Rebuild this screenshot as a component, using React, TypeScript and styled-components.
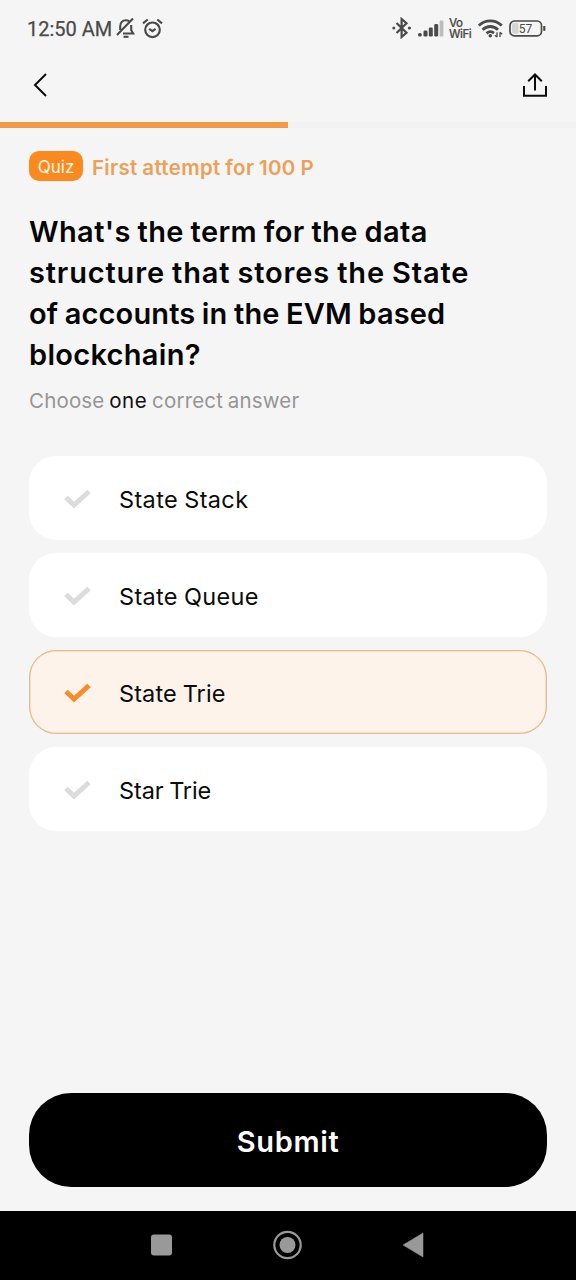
import React from 'react';
import styled, { createGlobalStyle } from 'styled-components';

const GlobalStyle = createGlobalStyle`
  * { box-sizing: border-box; }
  body { margin: 0; background: #f5f5f5; }
`;

const Screen = styled.div`
  width: 576px;
  height: 1280px;
  display: flex;
  flex-direction: column;
  background: #f5f5f5;
  color: #060606;
  font-family: Inter, "Open Sans", sans-serif;
  overflow: hidden;
`;

const StatusBar = styled.header`
  height: 56px;
  flex: none;
  display: flex;
  align-items: center;
  padding: 0 30px 0 27px;
  color: #4a4a4a;
  svg { display: block; flex: none; }
`;

const Clock = styled.span`
  width: 89px;
  padding-top: 1px;
  font: 400 20px/24px Roboto, sans-serif;
  white-space: nowrap;
  -webkit-text-stroke: 0.25px currentColor;
`;

const StatusIcons = styled.div<{ $push?: boolean }>`
  display: flex;
  align-items: center;
  gap: 6px;
  margin-left: ${(p) => (p.$push ? 'auto' : '0')};
`;

const NetworkLabel = styled.div`
  width: 22px;
  display: flex;
  flex-direction: column;
  gap: 1px;
  margin-left: -1px;
  margin-right: 1px;
  font: 500 11.5px/10px Inter, sans-serif;
  letter-spacing: -0.45px;
  white-space: nowrap;
  -webkit-text-stroke: 0.2px currentColor;
`;

const NavBar = styled.nav`
  height: 65px;
  flex: none;
  display: flex;
  align-items: center;
  justify-content: space-between;
  padding: 0 28px 8px 32px;
`;

const IconButton = styled.button`
  display: flex;
  padding: 0;
  border: 0;
  background: none;
  color: #0c0c0c;
`;

const ProgressTrack = styled.div`
  height: 6px;
  flex: none;
  margin-top: 0.5px;
  background: #f2f2f2;
`;

const ProgressFill = styled.div`
  width: 50%;
  height: 100%;
  background: #f39a49;
`;

const Content = styled.main`
  flex: 1;
  display: flex;
  flex-direction: column;
  padding: 23.5px 29px 23.5px;
`;

const AttemptRow = styled.div`
  display: flex;
  align-items: center;
  gap: 9px;
  height: 30px;
`;

const Badge = styled.span`
  width: 54px;
  height: 30px;
  border-radius: 10px;
  background: #fb8a1e;
  color: #fff3e4;
  display: flex;
  align-items: center;
  justify-content: center;
  font-size: 17px;
  padding-top: 1px;
`;

const Attempt = styled.span`
  padding-top: 2px;
  color: #eda057;
  font-size: 20.5px;
  font-weight: 600;
  letter-spacing: 0.32px;
  word-spacing: -0.8px;
  white-space: nowrap;
`;

const Question = styled.h1`
  margin: 30px 0 0;
  font-size: 29px;
  line-height: 41px;
  font-weight: 600;
`;

const Line = styled.span<{ $tracking: number }>`
  display: block;
  letter-spacing: ${(p) => p.$tracking}px;
  word-spacing: -1px;
  white-space: nowrap;
`;

const Hint = styled.p`
  margin: 12px 0 0;
  font-size: 20.5px;
  line-height: 28px;
  letter-spacing: 0.17px;
  word-spacing: -1.2px;
  color: #959595;
  strong { font-weight: 400; color: #101010; letter-spacing: 0.6px; }
`;

const Options = styled.div`
  display: flex;
  flex-direction: column;
  gap: 13px;
  margin-top: 41px;
`;

const Option = styled.button<{ $selected?: boolean }>`
  height: 84px;
  display: flex;
  align-items: center;
  gap: 27px;
  padding: 2px 34px 0;
  border: 0;
  border-radius: 27px;
  background: ${(p) => (p.$selected ? '#fdf3ea' : '#fff')};
  box-shadow: ${(p) => (p.$selected ? 'inset 0 0 0 1.3px #e9b98a' : 'none')};
  color: #0b0b0b;
  text-align: left;
`;

const OptionLabel = styled.span<{ $tracking: number }>`
  padding-top: 1px;
  font: 400 23.5px/32px Inter, sans-serif;
  letter-spacing: ${(p) => p.$tracking}px;
  word-spacing: -0.8px;
`;

const Submit = styled.button`
  height: 94px;
  margin-top: auto;
  border: 0;
  border-radius: 42px;
  background: #000;
  color: #fff;
  font: 600 29px/38px Inter, sans-serif;
  letter-spacing: 0.65px;
  padding: 4px 0 0;
`;

const SystemBar = styled.footer`
  height: 69.5px;
  flex: none;
  display: flex;
  align-items: center;
  justify-content: center;
  gap: 100px;
  background: #000;
`;

const Check = ({ color }: { color: string }) => (
  <svg width="29" height="22" viewBox="0 0 29 22" fill="none" stroke={color} strokeWidth="5">
    <path d="M3 9.5 11 17 26 3.5" />
  </svg>
);

const questionLines = [
  { text: "What's the term for the data", tracking: 0.39 },
  { text: 'structure that stores the State', tracking: 0.84 },
  { text: 'of accounts in the EVM based', tracking: 0.15 },
  { text: 'blockchain?', tracking: 0.3 },
];

const answers = [
  { text: 'State Stack', tracking: 0.36 },
  { text: 'State Queue', tracking: 0.33 },
  { text: 'State Trie', tracking: 0.1, selected: true },
  { text: 'Star Trie', tracking: -0.12 },
];

export default function App() {
  return (
    <Screen>
      <GlobalStyle />
      <StatusBar>
        <Clock>12:50 AM</Clock>
        <StatusIcons>
          <svg width="20" height="22" viewBox="0 0 20 22" fill="none" stroke="currentColor" strokeWidth="2.1">
            <path d="M4.2 13V9.2C4.2 5.8 6.4 3.3 9.8 3.3c1.3 0 2.3.3 3.2.9M15.2 8v5.2l2 3.3H7M1 18 17 1.5" />
            <path d="M7.5 19.8h5" />
          </svg>
          <svg width="21" height="21" viewBox="0 0 21 21" fill="none" stroke="currentColor" strokeWidth="2.2">
            <circle cx="10.5" cy="11.8" r="7.3" />
            <path d="M7.2 10.8l3.2 2.4 3.2-2.4M1 5.3 5.7 1.5M20 5.3 15.3 1.5" />
          </svg>
        </StatusIcons>
        <StatusIcons $push>
          <svg width="20" height="22" viewBox="0 0 20 22" fill="none" stroke="currentColor" strokeWidth="2.2">
            <path d="M4.5 6 14.5 15.8 9.6 20V2l4.9 4.2L4.5 16" />
            <circle cx="1.8" cy="11" r="1.5" fill="currentColor" stroke="none" />
            <circle cx="17.4" cy="11" r="1.6" fill="currentColor" stroke="none" />
          </svg>
          <svg width="26" height="17" viewBox="0 0 26 17" fill="currentColor">
            <rect x="0" y="13" width="3.8" height="3.6" rx="1.6" />
            <rect x="5.5" y="10.6" width="4" height="6" rx="1.4" />
            <rect x="10.8" y="7.4" width="4" height="9.2" rx="1.4" />
            <rect x="16.2" y="4" width="4" height="12.6" rx="1.4" />
            <rect x="21.6" y="0.4" width="3.8" height="16.2" rx="1.2" fill="#bdbdbd" />
          </svg>
          <NetworkLabel><span>Vo</span><span>WiFi</span></NetworkLabel>
          <svg width="25" height="19" viewBox="0 0 25 19" fill="none" stroke="currentColor" strokeWidth="2.8">
            <path d="M0.8 6.6C7.3.2 17.3.2 23.8 6.6M4.6 10.8c4.6-4.4 10.8-4.4 15.4 0M8.6 14.4c2.4-2.2 5-2.2 7.4-.3" />
            <circle cx="12.3" cy="16.7" r="1.8" fill="currentColor" stroke="none" />
            <path d="M19 13.2V18M16.9 16.2 19 18M22 18v-4.8M24.2 15.2 22 13.2" strokeWidth="1.3" />
          </svg>
          <svg width="37" height="17" viewBox="0 0 37 17">
            <rect x="1" y="1" width="31.5" height="14.8" rx="4.4" fill="none" stroke="currentColor" strokeWidth="1.7" />
            <path d="M5 3h4.5v10.8H5Q3 13.8 3 11.8V5Q3 3 5 3Z" fill="#d5d5d5" />
            <path d="M35.3 6v4.8" stroke="currentColor" strokeWidth="2.2" />
            <text x="16.6" y="12.6" textAnchor="middle" fontFamily="Roboto" fontSize="12" fontWeight="400" fill="currentColor">57</text>
          </svg>
        </StatusIcons>
      </StatusBar>
      <NavBar>
        <IconButton aria-label="Back">
          <svg width="16" height="26" viewBox="0 0 16 26" fill="none" stroke="currentColor" strokeWidth="2">
            <path d="M14 2 3 13 14 24" />
          </svg>
        </IconButton>
        <IconButton aria-label="Share">
          <svg width="26" height="26" viewBox="0 0 26 26" fill="none" stroke="currentColor" strokeWidth="2">
            <path d="M13 18.5V2.8M6.2 9.3 13 2.5l6.8 6.8M2 14v9.7h22V14" />
          </svg>
        </IconButton>
      </NavBar>
      <ProgressTrack><ProgressFill /></ProgressTrack>
      <Content>
        <AttemptRow>
          <Badge>Quiz</Badge>
          <Attempt>First attempt for 100 P</Attempt>
        </AttemptRow>
        <Question>
          {questionLines.map((line) => (
            <Line key={line.text} $tracking={line.tracking}>{line.text}</Line>
          ))}
        </Question>
        <Hint>Choose <strong>one</strong> correct answer</Hint>
        <Options>
          {answers.map((answer) => (
            <Option key={answer.text} $selected={answer.selected}>
              <Check color={answer.selected ? '#f68d2a' : '#dcdcdc'} />
              <OptionLabel $tracking={answer.tracking}>{answer.text}</OptionLabel>
            </Option>
          ))}
        </Options>
        <Submit>Submit</Submit>
      </Content>
      <SystemBar>
        <svg width="26" height="30" viewBox="0 0 26 30"><rect x="4" y="4.5" width="21" height="21" rx="3" fill="#999" /></svg>
        <svg width="30" height="30" viewBox="0 0 30 30"><circle cx="14.5" cy="15" r="13.2" fill="none" stroke="#999" strokeWidth="2.2" /><circle cx="14.5" cy="15" r="8" fill="#999" /></svg>
        <svg width="26" height="30" viewBox="0 0 26 30"><path d="M0 15 20 3v24Z" fill="#999" stroke="#999" strokeWidth="0.5" strokeLinejoin="round" /></svg>
      </SystemBar>
    </Screen>
  );
}
